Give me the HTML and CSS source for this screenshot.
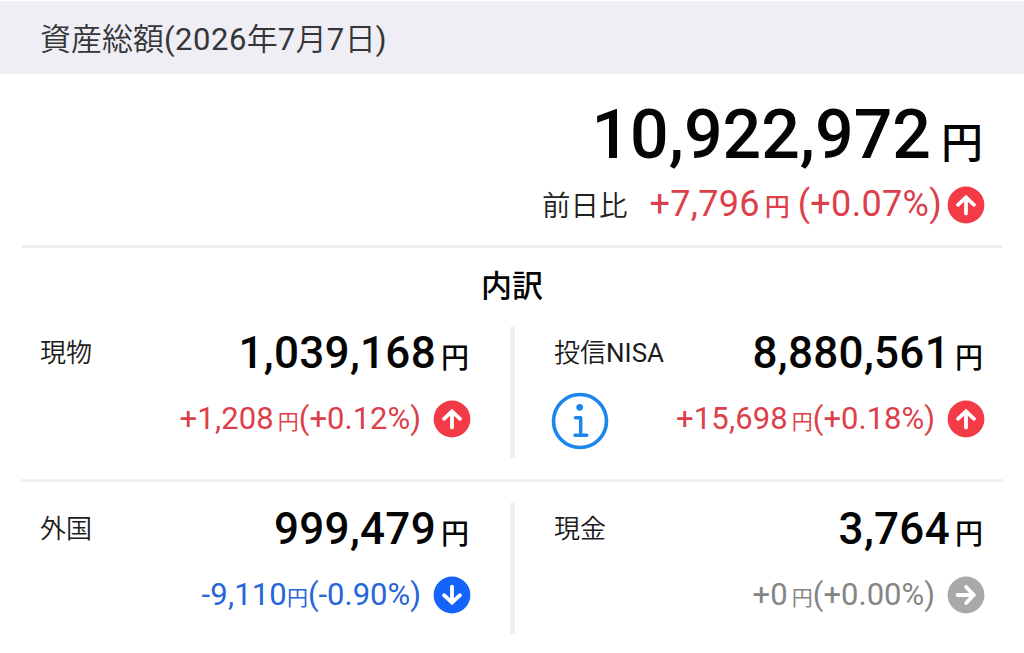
FILE: index.html
```
<!DOCTYPE html>
<html lang="ja">
<head>
<meta charset="utf-8">
<title>資産総額</title>
<link rel="stylesheet" href="styles.css">
</head>
<body>
<svg class="defs" width="0" height="0">
  <symbol id="arrow" viewBox="0 0 38 38">
    <circle cx="19" cy="19" r="18.4" fill="currentColor"/>
    <path d="M19 27.4V12M11 18.8L19 11.4L27 18.8" fill="none" stroke="#fff" stroke-width="3.8" stroke-linecap="round"/>
  </symbol>
</svg>
<header class="header">資産総額<span class="latin">(2026</span>年<span class="latin">7</span>月<span class="latin">7</span>日<span class="latin">)</span></header>
<section class="summary">
  <div class="total"><span class="total-num">10,922,972</span><span class="total-yen">円</span></div>
  <div class="day up">
    <span class="day-label">前日比</span><span class="day-num">+7,796</span><span class="day-yen">円</span><span class="day-pct">(+0.07%)</span>
    <svg class="icon"><use href="#arrow"/></svg>
  </div>
</section>
<section class="breakdown">
  <h2 class="heading">内訳</h2>
  <div class="pair">
    <article class="cell">
      <div class="row"><span class="label">現物</span><span class="num">1,039,168</span><span class="yen">円</span></div>
      <div class="delta up"><span class="d-num">+1,208</span><span class="d-yen">円</span><span class="d-pct">(+0.12%)</span><svg class="icon"><use href="#arrow"/></svg></div>
    </article>
    <div class="bar"></div>
    <article class="cell">
      <div class="row"><span class="label">投信<span class="latin">NISA</span></span><span class="num">8,880,561</span><span class="yen">円</span></div>
      <div class="delta up">
        <svg class="info" viewBox="0 0 58 58"><circle cx="29" cy="29" r="26.5" fill="none" stroke="currentColor" stroke-width="3.6"/><circle cx="28.7" cy="15.3" r="3.4" fill="currentColor"/><path d="M24.5 25.7H29.7V43M24 43.2H35.8" fill="none" stroke="currentColor" stroke-width="3.4" stroke-linecap="round" stroke-linejoin="round"/></svg>
        <span class="d-num">+15,698</span><span class="d-yen">円</span><span class="d-pct">(+0.18%)</span><svg class="icon"><use href="#arrow"/></svg></div>
    </article>
  </div>
  <div class="pair">
    <article class="cell">
      <div class="row"><span class="label">外国</span><span class="num">999,479</span><span class="yen">円</span></div>
      <div class="delta down"><span class="d-num">-9,110</span><span class="d-yen tight">円</span><span class="d-pct">(-0.90%)</span><svg class="icon"><use href="#arrow"/></svg></div>
    </article>
    <div class="bar"></div>
    <article class="cell">
      <div class="row"><span class="label">現金</span><span class="num">3,764</span><span class="yen">円</span></div>
      <div class="delta flat"><span class="d-num">+0</span><span class="d-yen">円</span><span class="d-pct">(+0.00%)</span><svg class="icon"><use href="#arrow"/></svg></div>
    </article>
  </div>
</section>
</body>
</html>
```
FILE: styles.css
```
* { box-sizing: border-box; }
body {
  margin: 0;
  width: 1024px;
  height: 653px;
  overflow: hidden;
  background: #fff;
  color: #050505;
  font-family: Roboto, "Noto Sans CJK JP", sans-serif;
  font-weight: 400;
}
.defs { position: absolute; }
.header {
  height: 73px;
  margin-top: 1px;
  padding-left: 40px;
  background: #efeef5;
  color: #363638;
  font-size: 31px;
  font-weight: 350;
  line-height: 78px;
  white-space: nowrap;
}
.header .latin { letter-spacing: 0.5px; }
.latin { font-weight: 400; }
.summary {
  height: 174px;
  margin: 0 21px;
  padding: 27px 18px 0 19px;
  border-bottom: 3px solid #f0f0f4;
}
.total, .day, .row, .delta {
  display: flex;
  align-items: baseline;
  justify-content: flex-end;
  white-space: nowrap;
}
.total { height: 79px; font-weight: 500; }
.total-num { font-size: 68px; line-height: 68px; }
.total-yen { margin: 0 2px 0 10px; font-size: 42px; line-height: 42px; }
.day { height: 50px; }
.day-label { margin-right: 22px; color: #222; font-size: 28.5px; font-weight: 350; line-height: 28px; }
.day-num, .day-pct { font-size: 36px; line-height: 48px; letter-spacing: 0.3px; }
.day-yen { margin: 0 8px 0 5px; font-size: 25px; font-weight: 500; line-height: 25px; }
.up { color: #dc404b; }
.down { color: #2566d8; }
.flat { color: #858585; }
.icon { flex: none; align-self: center; width: 38px; height: 38px; color: #f23b47; }
.day .icon { margin-left: 5px; }
.down .icon { color: #1463fa; transform: rotate(180deg); }
.flat .icon { color: #a9a9a9; transform: rotate(90deg); }
.heading {
  margin: 0;
  height: 79px;
  font-size: 31px;
  font-weight: 500;
  line-height: 78px;
  text-align: center;
}
.pair {
  display: flex;
  height: 155px;
  margin: 0 21px 21px;
  padding: 0 18px 0 19px;
  border-bottom: 3px solid #f0f0f4;
}
.pair:last-child { border-bottom: 0; }
.bar { flex: none; width: 5px; height: 131px; margin: 0 39px 0 39px; background: #efeef5; }
.cell { flex: none; width: 431px; }
.row { height: 65px; }
.label { align-self: flex-start; margin: 13px auto 0 0; color: #1c1c1c; font-size: 26px; font-weight: 350; line-height: 26px; }
.num { font-size: 44px; font-weight: 500; line-height: 52px; letter-spacing: 0.3px; }
.yen { margin: 0 2px 0 5px; font-size: 28px; font-weight: 500; line-height: 28px; }
.delta { height: 53px; }
.d-num, .d-pct { font-size: 31px; line-height: 53px; }
.d-num { letter-spacing: 0.15px; }
.d-yen { margin-left: 4px; font-size: 21px; line-height: 21px; }
.tight { margin-left: 0; }
.delta .icon { margin-left: 12px; }
.info { flex: none; align-self: center; width: 58px; height: 58px; margin: 4px auto 0 -3px; color: #1c86ec; }
```
